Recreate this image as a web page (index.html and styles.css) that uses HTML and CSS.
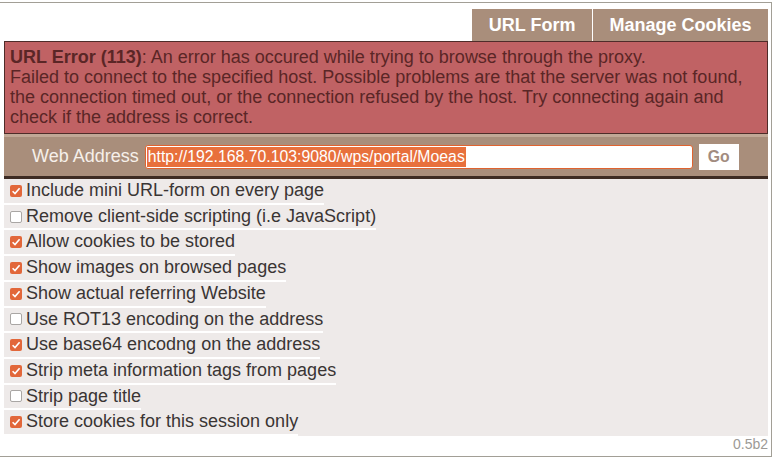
FILE: index.html
```html
<!DOCTYPE html>
<html>
<head>
<meta charset="utf-8">
<link rel="stylesheet" href="styles.css">
</head>
<body>
<div class="frame">
  <div class="tabs">
    <a class="tab">URL Form</a>
    <a class="tab tab-sep">Manage Cookies</a>
  </div>
  <div class="error">
    <b>URL Error (113)</b>: An error has occured while trying to browse through the proxy.<br>
    Failed to connect to the specified host. Possible problems are that the server was not found, the connection timed out, or the connection refused by the host. Try connecting again and check if the address is correct.
  </div>
  <div class="addr">
    <span class="addr-label">Web Address</span>
    <div class="addr-input"><span class="sel">http://192.168.70.103:9080/wps/portal/Moeas</span></div>
    <span class="go">Go</span>
  </div>
  <div class="options">
    <label class="opt"><span class="cb on"><svg viewBox="0 0 12 12" width="12" height="12"><path d="M2.6 6.2 L5 8.6 L9.6 3.2" fill="none" stroke="#fff" stroke-width="1.6"/></svg></span>Include mini URL-form on every page</label>
    <label class="opt"><span class="cb"></span>Remove client-side scripting (i.e JavaScript)</label>
    <label class="opt"><span class="cb on"><svg viewBox="0 0 12 12" width="12" height="12"><path d="M2.6 6.2 L5 8.6 L9.6 3.2" fill="none" stroke="#fff" stroke-width="1.6"/></svg></span>Allow cookies to be stored</label>
    <label class="opt"><span class="cb on"><svg viewBox="0 0 12 12" width="12" height="12"><path d="M2.6 6.2 L5 8.6 L9.6 3.2" fill="none" stroke="#fff" stroke-width="1.6"/></svg></span>Show images on browsed pages</label>
    <label class="opt"><span class="cb on"><svg viewBox="0 0 12 12" width="12" height="12"><path d="M2.6 6.2 L5 8.6 L9.6 3.2" fill="none" stroke="#fff" stroke-width="1.6"/></svg></span>Show actual referring Website</label>
    <label class="opt"><span class="cb"></span>Use ROT13 encoding on the address</label>
    <label class="opt"><span class="cb on"><svg viewBox="0 0 12 12" width="12" height="12"><path d="M2.6 6.2 L5 8.6 L9.6 3.2" fill="none" stroke="#fff" stroke-width="1.6"/></svg></span>Use base64 encodng on the address</label>
    <label class="opt"><span class="cb on"><svg viewBox="0 0 12 12" width="12" height="12"><path d="M2.6 6.2 L5 8.6 L9.6 3.2" fill="none" stroke="#fff" stroke-width="1.6"/></svg></span>Strip meta information tags from pages</label>
    <label class="opt"><span class="cb"></span>Strip page title</label>
    <label class="opt"><span class="cb on"><svg viewBox="0 0 12 12" width="12" height="12"><path d="M2.6 6.2 L5 8.6 L9.6 3.2" fill="none" stroke="#fff" stroke-width="1.6"/></svg></span>Store cookies for this session only</label>
  </div>
  <div class="version">0.5b2</div>
</div>
</body>
</html>
```
FILE: styles.css
```css
html, body {
  margin: 0;
  padding: 0;
  background: #ffffff;
}
body {
  font-family: "Liberation Sans", Arial, sans-serif;
  font-size: 18px;
}
.frame {
  box-sizing: border-box;
  width: 772px;
  margin-top: 2px;
  border: 1px solid #a29f96;
  border-left: none;
  padding: 6px 3px 0 4px;
}
.tabs {
  display: flex;
  justify-content: flex-end;
}
.tab {
  display: block;
  background: #a98e7b;
  color: #ffffff;
  font-weight: bold;
  line-height: 32px;
  padding: 0 16.5px;
}
.tab-sep {
  border-left: 1px solid #ffffff;
}
.error {
  background: #c06264;
  border: 1px solid #4e2c29;
  color: #5a2626;
  line-height: 20px;
  padding: 5px 5px 6px;
}
.addr {
  display: flex;
  align-items: center;
  height: 39px;
  background: #a98e7b;
  border-top: 3px solid #c1a896;
  border-bottom: 3px solid #3d2b23;
  padding-left: 28px;
}
.addr-label {
  color: #f6f0ea;
  margin-right: 6px;
}
.addr-input {
  box-sizing: border-box;
  width: 548px;
  height: 24px;
  background: #ffffff;
  border: 1px solid #e0632f;
  border-radius: 3px;
  padding: 1px 0 1px 1px;
  display: flex;
}
.sel {
  background: #e8703c;
  color: #ffffff;
  font-size: 15.8px;
  line-height: 20px;
  padding: 0 1px;
}
.go {
  box-sizing: border-box;
  width: 40px;
  height: 26px;
  margin-left: 6px;
  background: #ffffff;
  color: #a28c7f;
  font-weight: bold;
  font-size: 15.8px;
  line-height: 26px;
  text-align: center;
}
.options {
  background: #eeeae9;
  display: flex;
  flex-direction: column;
  align-items: flex-start;
}
.opt {
  display: flex;
  align-items: center;
  line-height: 23.7px;
  border-bottom: 2px solid #ffffff;
  color: #3a3534;
  padding-left: 6px;
}
.cb {
  box-sizing: border-box;
  width: 12px;
  height: 12px;
  margin-right: 4px;
  border: 1px solid #a9a6a4;
  border-radius: 2px;
  background: #ffffff;
  display: flex;
}
.cb.on {
  border: none;
  background: #e2673a;
}
.version {
  text-align: right;
  color: #9c9a96;
  font-size: 14px;
  line-height: 14px;
  padding: 1px 0 5px;
}
```
